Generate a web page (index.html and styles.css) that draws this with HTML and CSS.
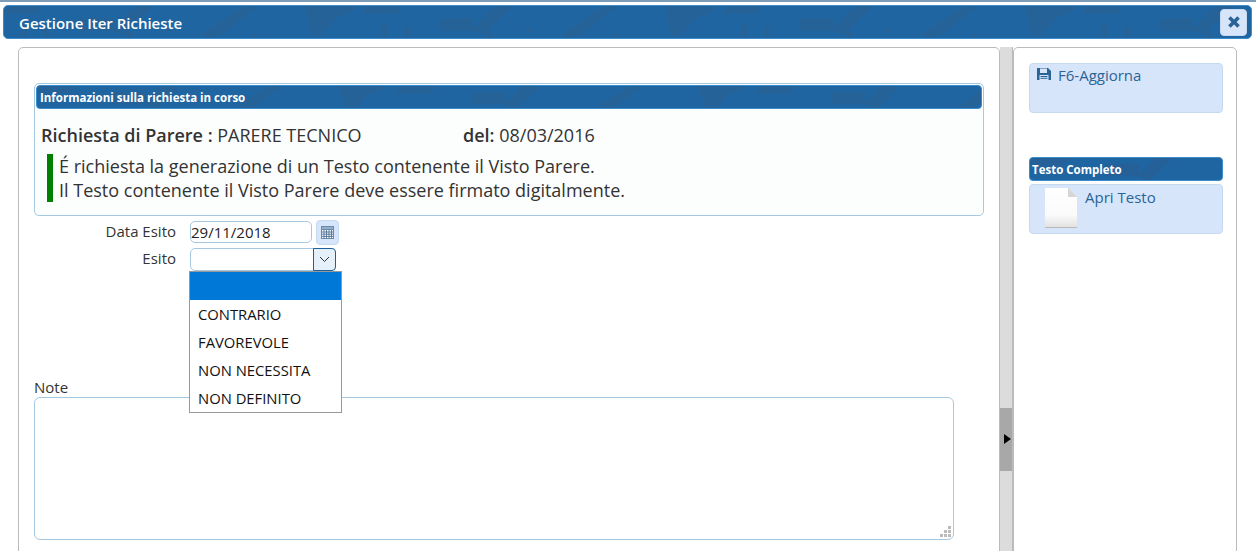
FILE: index.html
```html
<!DOCTYPE html>
<html lang="it">

<head>
    <meta charset="UTF-8">
    <title>Gestione Iter Richieste</title>
    <link rel="stylesheet" href="styles.css">
</head>

<body>
    <div class="topline"></div>
    <header class="titlebar">
        <span>Gestione Iter Richieste</span>
        <button class="close">
            <svg width="14" height="14" viewBox="0 0 12 12">
                <path d="M1 3.2 3.2 1 6 3.8 8.8 1 11 3.2 8.2 6 11 8.8 8.8 11 6 8.200 3.200 11 1 8.800 3.800 6z" fill="#2a6496" />
            </svg>
        </button>
    </header>

    <div class="layout">
        <main class="panel">
            <section class="info">
                <h3 class="bar info-bar">Informazioni sulla richiesta in corso</h3>
                <div class="info-row">
                    <div class="info-type"><b>Richiesta di Parere :</b> PARERE TECNICO</div>
                    <div><b>del:</b> 08/03/2016</div>
                </div>
                <div class="notice">
                    É richiesta la generazione di un Testo contenente il Visto Parere.<br>
                    Il Testo contenente il Visto Parere deve essere firmato digitalmente.
                </div>
            </section>

            <div class="field">
                <label>Data Esito</label>
                <input class="date" type="text" value="29/11/2018">
                <span class="cal">
                    <svg width="13" height="13" viewBox="0 0 13 13">
                        <rect x="0.500" y="0.500" width="12" height="12" fill="#fff" stroke="#6a8aa8" />
                        <rect x="0.500" y="0.500" width="12" height="3" fill="#8fb0cf" stroke="#6a8aa8" />
                        <path d="M3 4v8M5.500 4v8M8 4v8M10.500 4v8M1 6h11M1 8.200h11M1 10.400h11" stroke="#5a7a9a" stroke-width="1" fill="none" />
                    </svg>
                </span>
            </div>
            <div class="field esito">
                <label>Esito</label>
                <div class="select">
                    <span class="select-btn">
                        <svg width="11" height="7" viewBox="0 0 11 7">
                            <path d="M1 1l4.500 4.500L10 1" stroke="#333" stroke-width="1" fill="none" />
                        </svg>
                    </span>
                </div>
                <ul class="options">
                    <li class="selected"></li>
                    <li>CONTRARIO</li>
                    <li>FAVOREVOLE</li>
                    <li>NON NECESSITA</li>
                    <li>NON DEFINITO</li>
                </ul>
            </div>

            <label class="note-label">Note</label>
            <div class="note">
                <svg class="grip" width="11" height="11" viewBox="0 0 11 11">
                    <path d="M8 0h3v3H8zM4 4h3v3H4zM8 4h3v3H8zM0 8h3v3H0zM4 8h3v3H4zM8 8h3v3H8z" fill="#bbb" />
                </svg>
            </div>
        </main>

        <div class="splitter">
            <div class="split-handle"></div>
        </div>

        <aside class="side">
            <a class="btn save">
                <svg width="14" height="14" viewBox="0 0 14 14">
                    <path d="M0 1h11l3 3v9H0z" fill="#2a6496" />
                    <rect x="3" y="1.500" width="7" height="4.500" fill="#d7e5fb" />
                    <rect x="2.500" y="8" width="9" height="5" fill="#d7e5fb" />
                    <path d="M3.500 9.500h7M3.500 11.300h7" stroke="#2a6496" />
                </svg>
                F6-Aggiorna
            </a>
            <h3 class="bar side-bar">Testo Completo</h3>
            <a class="btn open">
                <svg width="34" height="42" viewBox="0 0 34 42">
                    <defs>
                        <linearGradient id="sheet" x1="0" y1="0" x2="0" y2="1">
                            <stop offset="0" stop-color="#ffffff" />
                            <stop offset="0.700" stop-color="#fafafa" />
                            <stop offset="1" stop-color="#e2e2e2" />
                        </linearGradient>
                    </defs>
                    <path d="M1 1h23l9 9v31H1z" fill="#b9b9b9" />
                    <path d="M1 1h23l9 9v30H1z" fill="url(#sheet)" />
                    <path d="M24 1v9h9z" fill="#d6d6d6" />
                </svg>
                <span>Apri Testo</span>
            </a>
        </aside>
    </div>
</body>

</html>
```

FILE: styles.css
```css
html,
body {
    height: 551px;
    overflow: hidden;
}

body {
    margin: 0;
    background-color: #fff;
    font-family: "Open Sans", sans-serif;
    font-size: 15px;
    color: #333;
}

.topline {
    height: 2px;
    background-color: #7d9cb8;
    margin-bottom: 3px;
}

/* title bar */
.titlebar {
    display: flex;
    justify-content: space-between;
    align-items: center;
    height: 34px;
    box-sizing: border-box;
    margin: 0 4px 0 3px;
    padding: 2px 4px 0 15px;
    color: #fff;
    font-size: 15px;
    font-weight: 600;
    background-color: #1f65a2;
    background-image: url("data:image/svg+xml,%3Csvg xmlns='http://www.w3.org/2000/svg' width='360' height='34'%3E%3Cg fill='%232a5f90' fill-opacity='.55'%3E%3Cpath d='M0 0h40l-8 8H0zM75 12h34v13H75zM107 25 130 0h20l-30 28zM195 30 240 0h14l-38 30zM300 0h55l-15 10h-6l-18 20h-8zM18 18h5v14h-5zM40 20h6v12h-6z'/%3E%3Ccircle cx='125' cy='29' r='4'/%3E%3Ccircle cx='165' cy='24' r='3'/%3E%3Ccircle cx='205' cy='31' r='3'/%3E%3Ccircle cx='250' cy='30' r='3'/%3E%3C/g%3E%3C/svg%3E");
    border: 1px solid #3c8ccc;
    border-radius: 5px;
}

.close {
    display: flex;
    align-items: center;
    justify-content: center;
    width: 27px;
    height: 27px;
    margin-top: -2px;
    padding: 0;
    background-color: #d7e5fb;
    border: 1px solid #c5d9f1;
    border-radius: 4px;
}

.layout {
    display: flex;
    align-items: flex-start;
    margin: 8px 18px 0;
}

.panel {
    width: 982px;
    height: 520px;
    box-sizing: border-box;
    padding: 35px 15px 0;
    border: 1px solid #bbb;
    border-radius: 5px;
    flex-shrink: 0;
}

/* blue bars */
.bar {
    height: 24px;
    box-sizing: border-box;
    margin: 0;
    padding-left: 3px;
    line-height: 23px;
    color: #fff;
    font-size: 11.500px;
    font-weight: 700;
    background-color: #1f65a2;
    background-image: url("data:image/svg+xml,%3Csvg xmlns='http://www.w3.org/2000/svg' width='360' height='24'%3E%3Cg fill='%232a5f90' fill-opacity='.55'%3E%3Cpath d='M0 0h40l-8 8H0zM75 6h34v12H75zM107 18 125 0h18l-24 24zM195 24 232 0h14l-32 24zM300 0h50l-12 8h-6l-14 16h-8z'/%3E%3C/g%3E%3C/svg%3E");
    border: 1px solid #3c8ccc;
    border-radius: 4px;
}

/* info box */
.info {
    height: 133px;
    box-sizing: border-box;
    padding: 1px;
    border: 1px solid #a6c9e2;
    border-radius: 5px;
    background-color: #fcfdfd;
}

.info-row {
    display: flex;
    padding: 14px 0 0 5px;
    font-size: 18px;
    line-height: 24px;
}

.info-row b {
    font-weight: 600;
}

.info-type {
    width: 422px;
}

.notice {
    margin: 7px 0 0 11px;
    padding-left: 6px;
    border-left: 6px solid #008000;
    font-size: 18px;
    line-height: 24px;
}

/* form */
.field {
    display: flex;
    align-items: center;
    position: relative;
    margin-top: 4px;
    height: 24px;
}

.field.esito {
    margin-top: 3px;
}

.field label {
    width: 142px;
    margin-right: 14px;
    margin-top: -2px;
    text-align: right;
}

.date {
    width: 122px;
    height: 22px;
    box-sizing: border-box;
    padding: 0;
    border: 1px solid #a6c9e2;
    border-radius: 5px;
    font-family: inherit;
    font-size: 15px;
    color: #222;
}

.cal {
    display: flex;
    align-items: center;
    justify-content: center;
    width: 23px;
    height: 25px;
    margin-left: 4px;
    background-color: #d7e5fb;
    border: 1px solid #c5d9f1;
    border-radius: 4px;
    box-sizing: border-box;
}

.select {
    display: flex;
    justify-content: flex-end;
    width: 146px;
    height: 23px;
    box-sizing: border-box;
    border: 1px solid #a6c9e2;
    border-radius: 5px;
}

.select-btn {
    display: flex;
    align-items: center;
    justify-content: center;
    width: 21px;
    margin: -1px -1px -1px 0;
    background-color: #e6f0fa;
    border: 1px solid #1e5f9e;
    border-radius: 0 4px 4px 0;
}

.options {
    position: absolute;
    left: 155px;
    top: 24px;
    z-index: 2;
    width: 151px;
    margin: 0;
    padding: 0;
    list-style: none;
    background-color: #fff;
    border: 1px solid #999;
    color: #111;
    font-size: 14.800px;
}

.options li {
    height: 28px;
    line-height: 28px;
    padding-left: 8px;
}

.options .selected {
    background-color: #0078d7;
}

.note-label {
    display: block;
    margin-top: 107px;
    line-height: 19px;
}

.note {
    position: relative;
    width: 920px;
    height: 143px;
    box-sizing: border-box;
    border: 1px solid #a6c9e2;
    border-radius: 6px;
}

.grip {
    position: absolute;
    right: 2px;
    bottom: 2px;
}

/* splitter */
.splitter {
    display: flex;
    align-items: center;
    width: 13px;
    height: 504px;
    box-sizing: border-box;
    border-right: 1px solid #bbb;
    background-color: #dcdcdc;
    flex-shrink: 0;
}

.split-handle {
    width: 14px;
    height: 63px;
    margin-top: 280px;
    background-color: #a8a8a8;
    position: relative;
}

.split-handle::after {
    content: "";
    position: absolute;
    left: 4px;
    top: 26px;
    border-left: 7px solid #000;
    border-top: 5px solid transparent;
    border-bottom: 5px solid transparent;
}

/* side panel */
.side {
    width: 224px;
    height: 520px;
    box-sizing: border-box;
    padding: 15px 13px 0 15px;
    border: 1px solid #bbb;
    border-radius: 5px;
    flex-shrink: 0;
}

.btn {
    display: flex;
    align-items: flex-start;
    box-sizing: border-box;
    height: 50px;
    color: #2a6496;
    background-color: #d7e5fb;
    border: 1px solid #c5d9f1;
    border-radius: 4px;
    line-height: 22px;
}

.save {
    padding: 0 0 0 7px;
    gap: 7px;
}

.save svg {
    margin-top: 3px;
}

.side-bar {
    margin-top: 44px;
    padding-left: 2px;
}

.open {
    margin-top: 3px;
    padding: 1px 0 0 14px;
    gap: 7px;
}

.open svg {
    margin-top: 1px;
}
```
